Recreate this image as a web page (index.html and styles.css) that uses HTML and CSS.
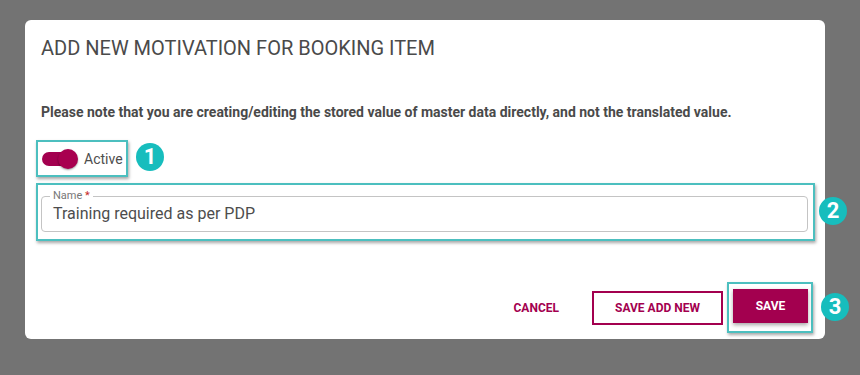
FILE: index.html
```html
<!DOCTYPE html>
<html lang="en">
  <head>
    <meta charset="UTF-8" />
    <title>Add new motivation</title>
    <link rel="stylesheet" href="styles.css">
  </head>
  <body>
    <div class="dialog">
      <h2 class="dialog-title">ADD NEW MOTIVATION FOR BOOKING ITEM</h2>
      <p class="note">Please note that you are creating/editing the stored value of master data directly, and not the translated value.</p>

      <div class="row">
        <div class="mark mark-toggle">
          <label class="toggle">
            <span class="track"><span class="thumb"></span></span>
            <span class="toggle-label">Active</span>
          </label>
          <span class="badge badge-1">1</span>
        </div>
      </div>

      <div class="mark mark-name">
        <fieldset class="field">
          <legend>Name <span class="req">*</span></legend>
          <div class="field-value">Training required as per PDP</div>
        </fieldset>
        <span class="badge badge-2">2</span>
      </div>

      <div class="actions">
        <button class="btn btn-text">CANCEL</button>
        <button class="btn btn-outline">SAVE ADD NEW</button>
        <div class="mark mark-save">
          <button class="btn btn-fill">SAVE</button>
          <span class="badge badge-3">3</span>
        </div>
      </div>
    </div>
  </body>
</html>
```

FILE: styles.css
```css
body {
  margin: 0;
  background-color: #737373;
  font-family: Roboto, "Liberation Sans", sans-serif;
  width: 860px;
  height: 375px;
  overflow: hidden;
}
.dialog {
  margin: 20px 0 0 25px;
  width: 800px;
  height: 319px;
  box-sizing: border-box;
  padding: 0 16px;
  background-color: #fff;
  border-radius: 6px;
  display: flex;
  flex-direction: column;
}
.dialog-title {
  margin: 16px 0 0;
  font-size: 20px;
  line-height: 24px;
  font-weight: 400;
  color: #4a4a4a;
}
.note {
  margin: 43px 0 0;
  font-size: 14px;
  line-height: 18px;
  font-weight: 700;
  color: #4a4a4a;
}
.row {
  display: flex;
  margin-top: 19px;
}
/* teal highlight boxes */
.mark {
  position: relative;
  border: 2px solid #4cbfbf;
  box-shadow: 1px 2px 3px rgba(0, 0, 0, 0.35);
}
.mark-toggle {
  margin-left: -5px;
  width: 88px;
  height: 33px;
  display: flex;
  align-items: center;
}
.toggle {
  display: flex;
  align-items: center;
  padding-left: 4px;
}
.track {
  position: relative;
  width: 34px;
  height: 14px;
  border-radius: 7px;
  background-color: #a3004f;
}
.thumb {
  position: absolute;
  top: -3px;
  right: -2px;
  width: 20px;
  height: 20px;
  border-radius: 50%;
  background-color: #a8004f;
  box-shadow: 0 1px 2px rgba(0, 0, 0, 0.4);
}
.toggle-label {
  margin-left: 8px;
  font-size: 14px;
  color: #4d4d4d;
}
.badge {
  position: absolute;
  width: 28px;
  height: 28px;
  border-radius: 50%;
  background-color: #17bdbd;
  color: #fff;
  font-size: 22px;
  font-weight: 700;
  line-height: 28px;
  text-align: center;
}
.badge-1 {
  left: 98px;
  top: 1px;
}
.mark-name {
  margin: 6px 0 0 -5px;
  width: 779px;
  height: 58px;
  box-sizing: border-box;
  padding: 6px 5px 0 3px;
}
.badge-2 {
  left: 781px;
  top: 12px;
}
.field {
  margin: 0;
  padding: 0 11px;
  height: 41px;
  box-sizing: border-box;
  border: 1px solid #c4c4c4;
  border-radius: 4px;
}
.field legend {
  padding: 0 3px;
  margin-left: -3px;
  font-size: 11px;
  line-height: 10px;
  color: #777;
}
.req {
  color: #c62828;
}
.field-value {
  margin-top: 3px;
  font-size: 16px;
  color: #4d4d4d;
}
.actions {
  display: flex;
  justify-content: flex-end;
  align-items: center;
  margin-top: auto;
  margin-bottom: 6px;
  margin-right: -4px;
}
.btn {
  font-family: Roboto, "Liberation Sans", sans-serif;
  font-size: 12px;
  font-weight: 700;
  height: 34px;
  cursor: pointer;
}
.btn-text {
  border: none;
  background: none;
  color: #a3004f;
  padding: 0 16px;
  margin-right: 17px;
}
.btn-outline {
  width: 131px;
  border: 2px solid #a3004f;
  background-color: #fff;
  color: #a3004f;
}
.mark-save {
  margin-left: 4px;
  padding: 5px 3px 8px 4px;
}
.btn-fill {
  width: 75px;
  display: block;
  border: none;
  background-color: #a3004f;
  color: #fff;
  box-shadow: 0 2px 4px rgba(0, 0, 0, 0.35);
}
.badge-3 {
  left: 92px;
  top: 9px;
}
```
